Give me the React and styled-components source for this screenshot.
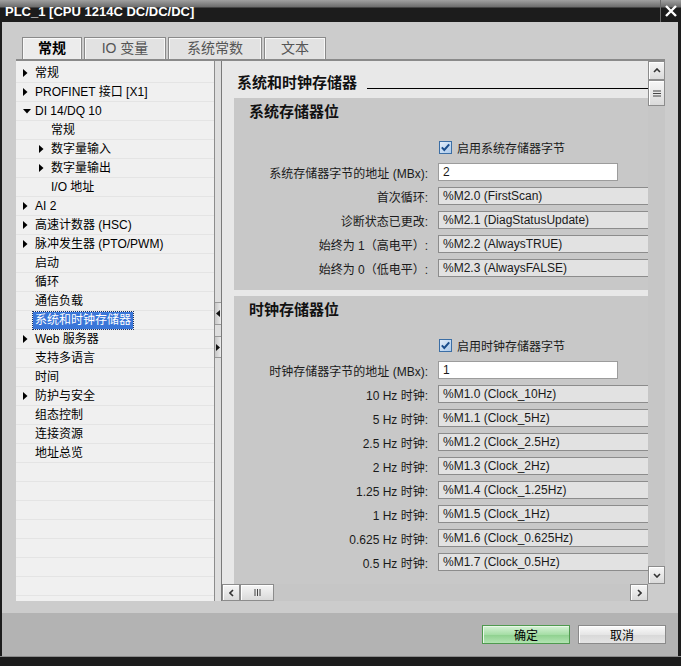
import React from "react";
import styled, { createGlobalStyle } from "styled-components";

const GlobalStyle = createGlobalStyle`
  html, body {
    margin: 0;
    padding: 0;
    background: #1c1c1c;
  }
  body {
    font-family: "Liberation Sans", "Noto Sans CJK SC", sans-serif;
    font-size: 12px;
    color: #1a1a1a;
  }
  * {
    box-sizing: border-box;
  }
`;

const treeItems = [
  { text: "常规", level: 0, arrow: "right" },
  { text: "PROFINET 接口 [X1]", level: 0, arrow: "right" },
  { text: "DI 14/DQ 10", level: 0, arrow: "down" },
  { text: "常规", level: 1 },
  { text: "数字量输入", level: 1, arrow: "right" },
  { text: "数字量输出", level: 1, arrow: "right" },
  { text: "I/O 地址", level: 1 },
  { text: "AI 2", level: 0, arrow: "right" },
  { text: "高速计数器 (HSC)", level: 0, arrow: "right" },
  { text: "脉冲发生器 (PTO/PWM)", level: 0, arrow: "right" },
  { text: "启动", level: 0 },
  { text: "循环", level: 0 },
  { text: "通信负载", level: 0 },
  { text: "系统和时钟存储器", level: 0, selected: true },
  { text: "Web 服务器", level: 0, arrow: "right" },
  { text: "支持多语言", level: 0 },
  { text: "时间", level: 0 },
  { text: "防护与安全", level: 0, arrow: "right" },
  { text: "组态控制", level: 0 },
  { text: "连接资源", level: 0 },
  { text: "地址总览", level: 0 },
];

const systemBits = [
  ["首次循环:", "%M2.0 (FirstScan)"],
  ["诊断状态已更改:", "%M2.1 (DiagStatusUpdate)"],
  ["始终为 1（高电平）:", "%M2.2 (AlwaysTRUE)"],
  ["始终为 0（低电平）:", "%M2.3 (AlwaysFALSE)"],
];

const clockBits = [
  ["10 Hz 时钟:", "%M1.0 (Clock_10Hz)"],
  ["5 Hz 时钟:", "%M1.1 (Clock_5Hz)"],
  ["2.5 Hz 时钟:", "%M1.2 (Clock_2.5Hz)"],
  ["2 Hz 时钟:", "%M1.3 (Clock_2Hz)"],
  ["1.25 Hz 时钟:", "%M1.4 (Clock_1.25Hz)"],
  ["1 Hz 时钟:", "%M1.5 (Clock_1Hz)"],
  ["0.625 Hz 时钟:", "%M1.6 (Clock_0.625Hz)"],
  ["0.5 Hz 时钟:", "%M1.7 (Clock_0.5Hz)"],
];

const tabs = [
  { label: "常规", width: 60, active: true },
  { label: "IO 变量", width: 82 },
  { label: "系统常数", width: 94 },
  { label: "文本", width: 62 },
];

export default function App() {
  return (
    <>
      <GlobalStyle />
      <Window>
        <TitleBar>
          <Title>PLC_1 [CPU 1214C DC/DC/DC]</Title>
          <CloseButton>
            <svg width="14" height="14" viewBox="0 0 14 14">
              <path d="M2 2 L12 12 M12 2 L2 12" stroke="#fff" strokeWidth="2.4" />
            </svg>
          </CloseButton>
        </TitleBar>

        <Body>
          <TabStrip>
            {tabs.map((t) => (
              <Tab key={t.label} $w={t.width} $active={t.active}>
                {t.label}
              </Tab>
            ))}
          </TabStrip>

          <Panel>
            <Tree>
              {treeItems.map((item, i) => (
                <TreeRow key={i} $level={item.level}>
                  <ArrowSlot>
                    {item.arrow === "right" && (
                      <svg width="5" height="8" viewBox="0 0 5 8">
                        <polygon points="0,0 4.5,4 0,8" fill="#000" />
                      </svg>
                    )}
                    {item.arrow === "down" && (
                      <svg width="8" height="5" viewBox="0 0 8 5">
                        <polygon points="0,0 8,0 4,4.5" fill="#000" />
                      </svg>
                    )}
                  </ArrowSlot>
                  <TreeLabel $selected={item.selected}>{item.text}</TreeLabel>
                </TreeRow>
              ))}
              {Array.from({ length: 8 }).map((_, i) => (
                <TreeRow key={"e" + i} $level={0} />
              ))}
            </Tree>

            <Splitter>
              <SplitButton $h={23}>
                <svg width="4" height="7" viewBox="0 0 4 7">
                  <polygon points="4,0 0,3.5 4,7" fill="#111" />
                </svg>
              </SplitButton>
              <SplitButton $h={22} $gap={11}>
                <svg width="4" height="7" viewBox="0 0 4 7">
                  <polygon points="0,0 4,3.5 0,7" fill="#111" />
                </svg>
              </SplitButton>
            </Splitter>

            <Editor>
              <Viewport>
                <Content>
                  <Header>
                    <HeaderTitle>系统和时钟存储器</HeaderTitle>
                    <HeaderRule />
                  </Header>

                  <Section>
                    <SectionTitle>系统存储器位</SectionTitle>
                    <FormGrid>
                      <CheckRow>
                        <CheckBox />
                        <span>启用系统存储器字节</span>
                      </CheckRow>
                      <Label>系统存储器字节的地址 (MBx):</Label>
                      <Field $w={180}>2</Field>
                      {systemBits.map(([l, v]) => (
                        <React.Fragment key={l}>
                          <Label>{l}</Label>
                          <Field $w={230} $readonly>
                            {v}
                          </Field>
                        </React.Fragment>
                      ))}
                    </FormGrid>
                  </Section>

                  <Section $gap={6}>
                    <SectionTitle>时钟存储器位</SectionTitle>
                    <FormGrid>
                      <CheckRow>
                        <CheckBox />
                        <span>启用时钟存储器字节</span>
                      </CheckRow>
                      <Label>时钟存储器字节的地址 (MBx):</Label>
                      <Field $w={180}>1</Field>
                      {clockBits.map(([l, v]) => (
                        <React.Fragment key={l}>
                          <Label>{l}</Label>
                          <Field $w={230} $readonly>
                            {v}
                          </Field>
                        </React.Fragment>
                      ))}
                    </FormGrid>
                  </Section>
                </Content>
              </Viewport>

              <VScroll>
                <ScrollButton $h={19}>
                  <svg width="8" height="5" viewBox="0 0 8 5">
                    <path d="M1 4 L4 1 L7 4" stroke="#333" strokeWidth="1.6" fill="none" />
                  </svg>
                </ScrollButton>
                <ScrollButton $h={26}>
                  <svg width="8" height="7" viewBox="0 0 8 7">
                    <path d="M0 1 H8 M0 3.5 H8 M0 6 H8" stroke="#444" strokeWidth="1" />
                  </svg>
                </ScrollButton>
                <Spacer />
                <ScrollButton $h={18}>
                  <svg width="8" height="5" viewBox="0 0 8 5">
                    <path d="M1 1 L4 4 L7 1" stroke="#333" strokeWidth="1.6" fill="none" />
                  </svg>
                </ScrollButton>
              </VScroll>

              <HScroll>
                <ScrollButton $w={18}>
                  <svg width="5" height="8" viewBox="0 0 5 8">
                    <path d="M4 1 L1 4 L4 7" stroke="#333" strokeWidth="1.6" fill="none" />
                  </svg>
                </ScrollButton>
                <ScrollButton $w={34}>
                  <svg width="7" height="7" viewBox="0 0 7 7">
                    <path d="M1 0 V7 M3.5 0 V7 M6 0 V7" stroke="#444" strokeWidth="1" />
                  </svg>
                </ScrollButton>
                <Spacer />
                <ScrollButton $w={18}>
                  <svg width="5" height="8" viewBox="0 0 5 8">
                    <path d="M1 1 L4 4 L1 7" stroke="#333" strokeWidth="1.6" fill="none" />
                  </svg>
                </ScrollButton>
              </HScroll>
              <Corner />
            </Editor>
          </Panel>
        </Body>

        <Footer>
          <DialogButton $primary>确定</DialogButton>
          <DialogButton>取消</DialogButton>
        </Footer>
        <BottomBar />
      </Window>
    </>
  );
}

function CheckBox() {
  return (
    <svg width="13" height="13" viewBox="0 0 13 13">
      <defs>
        <linearGradient id="cbfill" x1="0" y1="0" x2="1" y2="1">
          <stop offset="0" stopColor="#e4eefa" />
          <stop offset="1" stopColor="#a9c8ea" />
        </linearGradient>
      </defs>
      <rect x="0.5" y="0.5" width="12" height="12" fill="url(#cbfill)" stroke="#3b6ea5" />
      <path d="M2.8 6.4 L5.3 9 L10.2 3.4" stroke="#1b4d8c" strokeWidth="2" fill="none" />
    </svg>
  );
}

const Window = styled.div`
  width: 681px;
  height: 666px;
  display: flex;
  flex-direction: column;
  overflow: hidden;
`;

const TitleBar = styled.div`
  height: 22px;
  flex: none;
  display: flex;
  align-items: center;
  background: linear-gradient(#a0a0a0 0, #6c6c6c 7px, #1c1c1c 8px, #1c1c1c 100%);
  color: #fff;
`;

const Title = styled.div`
  padding-left: 5px;
  padding-top: 1px;
  font-family: "Liberation Sans", sans-serif;
  font-weight: bold;
  font-size: 13px;
  line-height: 16px;
`;

const CloseButton = styled.div`
  margin-left: auto;
  width: 21px;
  height: 22px;
  border-left: 1px solid #6a6a6a;
  display: flex;
  align-items: center;
  justify-content: center;
`;

const Body = styled.div`
  height: 591px;
  flex: none;
  background: #cccccc;
  border-left: 2px solid #1c1c1c;
  border-right: 3px solid #1c1c1c;
  padding: 15px 13px 12px 14px;
  display: flex;
  flex-direction: column;
`;

const TabStrip = styled.div`
  height: 22px;
  display: flex;
  gap: 2px;
  padding-left: 6px;
`;

const Tab = styled.div`
  width: ${(p) => p.$w}px;
  height: 22px;
  border: 1px solid #8a8a8a;
  border-bottom: none;
  box-shadow: inset 1px 1px 0 #f8f8f8, inset -1px 0 0 #f8f8f8;
  background: ${(p) => (p.$active ? "#ececec" : "#e2e2e2")};
  color: ${(p) => (p.$active ? "#000" : "#555")};
  font-weight: ${(p) => (p.$active ? "bold" : "normal")};
  font-size: 14px;
  line-height: 21px;
  text-align: center;
`;

const Panel = styled.div`
  height: 542px;
  border-top: 2px solid #8a8a8a;
  display: flex;
`;

const Tree = styled.div`
  width: 198px;
  flex: none;
  background: #f0f0f0;
  padding-top: 3px;
  overflow: hidden;
`;

const TreeRow = styled.div`
  height: 19px;
  flex: none;
  border-bottom: 1px solid #e4e4e4;
  display: flex;
  align-items: center;
  padding-left: ${(p) => 4 + p.$level * 16}px;
  white-space: nowrap;
`;

const ArrowSlot = styled.div`
  width: 15px;
  flex: none;
  display: flex;
  align-items: center;
  padding-left: 3px;
`;

const TreeLabel = styled.span`
  line-height: 17px;
  padding: 0 2px;
  margin-left: -2px;
  color: ${(p) => (p.$selected ? "#fff" : "#000")};
  background: ${(p) => (p.$selected ? "#3a76d8" : "transparent")};
  outline: ${(p) => (p.$selected ? "1px dotted #1a2f60" : "none")};
`;

const Splitter = styled.div`
  width: 8px;
  flex: none;
  border-left: 1px solid #8c8c8c;
  border-right: 1px solid #7a7a7a;
  background: #dedede;
  display: flex;
  flex-direction: column;
  padding-top: 241px;
`;

const SplitButton = styled.div`
  height: ${(p) => p.$h}px;
  margin-top: ${(p) => p.$gap || 0}px;
  border-top: 1px solid #9a9a9a;
  border-bottom: 1px solid #9a9a9a;
  background: linear-gradient(90deg, #c6c6c6, #ececec);
  display: flex;
  align-items: center;
  justify-content: center;
`;

const Editor = styled.div`
  flex: 1;
  display: grid;
  grid-template-columns: 1fr 17px;
  grid-template-rows: 1fr 17px;
  background: #cccccc;
  min-width: 0;
`;

const Viewport = styled.div`
  overflow: hidden;
  background: #e8e8e8;
  min-width: 0;
`;

const Content = styled.div`
  width: 460px;
`;

const Header = styled.div`
  height: 37px;
  display: flex;
  align-items: flex-start;
  padding-left: 15px;
`;

const HeaderTitle = styled.div`
  font-family: "Noto Sans CJK SC", sans-serif;
  font-weight: bold;
  font-size: 15px;
  line-height: 18px;
  padding-top: 12px;
  color: #111;
`;

const HeaderRule = styled.div`
  flex: 1;
  height: 1px;
  margin-top: 27px;
  margin-left: 10px;
  background: #000;
`;

const Section = styled.div`
  margin-left: 12px;
  margin-top: ${(p) => p.$gap || 0}px;
  padding: 4px 0 10px 15px;
  background: #c8c8c8;
`;

const SectionTitle = styled.div`
  font-family: "Noto Sans CJK SC", sans-serif;
  font-weight: bold;
  font-size: 15px;
  line-height: 18px;
  color: #111;
`;

const FormGrid = styled.div`
  margin-top: 15px;
  display: grid;
  grid-template-columns: 179px 1fr;
  grid-template-rows: 25px;
  grid-auto-rows: 24px;
  column-gap: 10px;
`;

const Label = styled.div`
  align-self: center;
  text-align: right;
  white-space: nowrap;
  color: #1a1a1a;
`;

const Field = styled.div`
  align-self: center;
  width: ${(p) => p.$w}px;
  height: 18px;
  border: 1px solid ${(p) => (p.$readonly ? "#8c8c8c" : "#9c9c9c")};
  background: ${(p) => (p.$readonly ? "#e2e2e2" : "#fff")};
  padding-left: 4px;
  line-height: 16px;
  white-space: nowrap;
  color: #1a1a1a;
`;

const CheckRow = styled.div`
  grid-column: 2;
  display: flex;
  align-items: center;
  gap: 5px;
  padding-left: 1px;
  color: #1a1a1a;
`;

const ScrollButton = styled.div`
  flex: none;
  width: ${(p) => (p.$w ? `${p.$w}px` : "100%")};
  height: ${(p) => (p.$h ? `${p.$h}px` : "100%")};
  border: 1px solid #8c8c8c;
  box-shadow: inset 1px 1px 0 #fff;
  background: linear-gradient(#f6f6f6, #dadada);
  display: flex;
  align-items: center;
  justify-content: center;
`;

const Spacer = styled.div`
  flex: 1;
`;

const VScroll = styled.div`
  grid-column: 2;
  grid-row: 1;
  background: #c6c6c6;
  display: flex;
  flex-direction: column;
`;

const HScroll = styled.div`
  grid-column: 1;
  grid-row: 2;
  background: #c6c6c6;
  display: flex;
`;

const Corner = styled.div`
  grid-column: 2;
  grid-row: 2;
  background: #cccccc;
`;

const Footer = styled.div`
  height: 43px;
  flex: none;
  background: #b3b3b3;
  border-left: 2px solid #1c1c1c;
  border-right: 3px solid #1c1c1c;
  display: flex;
  justify-content: flex-end;
  align-items: flex-start;
  gap: 8px;
  padding: 12px 12px 0 0;
`;

const DialogButton = styled.div`
  width: 88px;
  height: 19px;
  font-family: "Noto Sans CJK SC", sans-serif;
  font-size: 12px;
  line-height: 17px;
  text-align: center;
  color: #000;
  border: 1px solid ${(p) => (p.$primary ? "#4f9a4f" : "#8a8a8a")};
  box-shadow: inset 1px 1px 0 ${(p) => (p.$primary ? "#e8f8e8" : "#fff")};
  background: ${(p) =>
    p.$primary
      ? "linear-gradient(#d6f2d6, #a6dea6 50%, #8ed08e 52%, #b2e4b2)"
      : "linear-gradient(#fbfbfb, #e6e6e6 50%, #d8d8d8 52%, #e4e4e4)"};
`;

const BottomBar = styled.div`
  height: 10px;
  flex: none;
  background: #1c1c1c;
  border-top: 1px solid #8a8a8a;
`;
